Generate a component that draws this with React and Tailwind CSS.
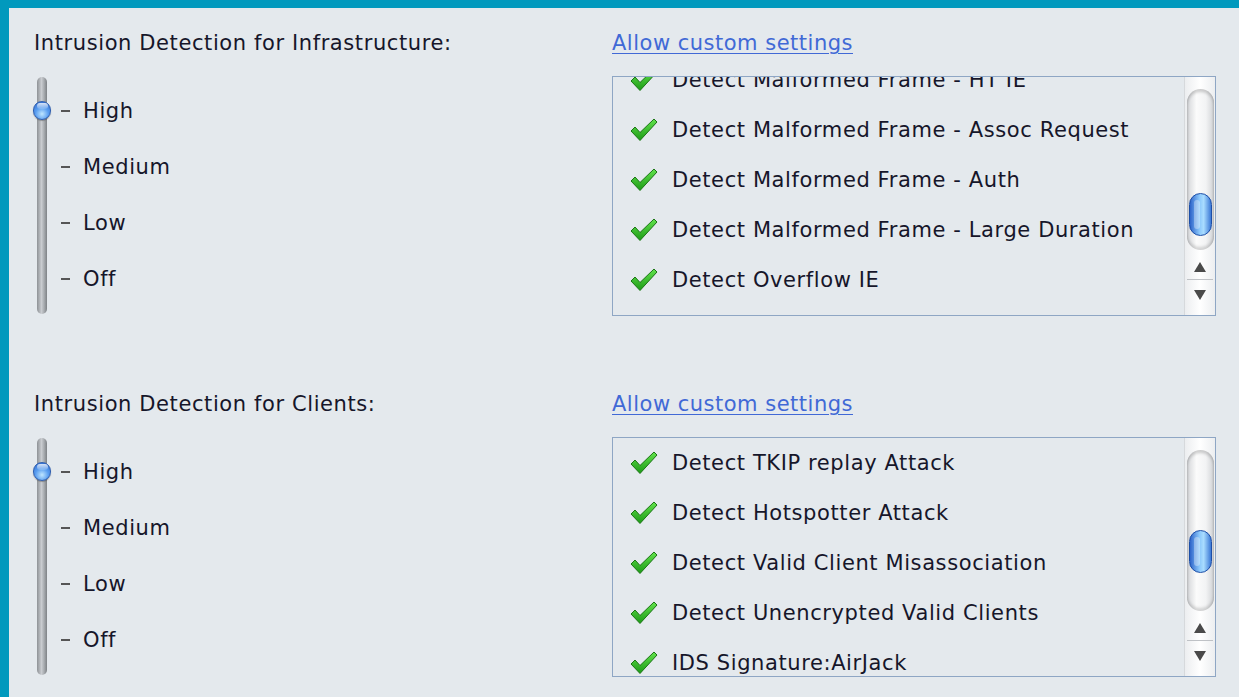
import React from "react";

const font = { fontFamily: '"DejaVu Sans", Verdana, sans-serif' };
const txt = "text-[21px] leading-[24px] tracking-[0.6px] text-[#16162a]";

function Check() {
  return (
    <svg width="28" height="24" viewBox="0 0 28 24" className="shrink-0">
      <defs>
        <linearGradient id="chk" x1="0" y1="0" x2="0" y2="1">
          <stop offset="0" stopColor="#62e34c" />
          <stop offset="1" stopColor="#1c9a16" />
        </linearGradient>
      </defs>
      <path
        d="M1 13 L5 9 L10 14.5 L24 1 L27 4 L10 22.5 Z"
        fill="url(#chk)"
        stroke="#1a7514"
        strokeWidth="1"
        strokeLinejoin="round"
      />
    </svg>
  );
}

function Knob() {
  return (
    <div className="absolute left-[-4px] top-[24px] h-[19px] w-[18px] rounded-full border border-[#2f5fb0] bg-[radial-gradient(circle_at_50%_70%,#bfe6ff_0%,#5a9ef0_45%,#2a62c8_100%)] shadow-[0_1px_1px_rgba(0,0,0,0.3)]">
      <div className="mx-auto mt-[1px] h-[6px] w-[11px] rounded-full bg-[linear-gradient(#ffffffcc,#ffffff22)]" />
    </div>
  );
}

function Slider() {
  const levels = ["High", "Medium", "Low", "Off"];
  return (
    <div className="relative flex h-[237px]">
      <div className="relative h-[237px] w-[10px] rounded-full bg-[linear-gradient(90deg,#8e9296_0%,#c9ccd0_45%,#a9adb1_70%,#7e8286_100%)]">
        <Knob />
      </div>
      <div className="flex flex-col pt-[22px]">
        {levels.map((l) => (
          <div key={l} className="flex h-[56px] shrink-0 items-start">
            <div className="flex h-[24px] items-center">
              <span className="ml-[14px] h-[2px] w-[9px] bg-[#555]" />
              <span className={`ml-[13px] ${txt}`}>{l}</span>
            </div>
          </div>
        ))}
      </div>
    </div>
  );
}

function Scrollbar({ thumbTop }) {
  return (
    <div className="flex w-[31px] flex-col border-l border-[#d6d9dc] bg-[linear-gradient(90deg,#eceef0,#ffffff_50%,#eceef0)]">
      <div className="relative mx-auto mt-[12px] h-[161px] w-[27px] rounded-full bg-[linear-gradient(90deg,#d3d5d8,#fbfbfb_35%,#f2f3f4_70%,#d0d2d5)] shadow-[inset_0_3px_3px_rgba(0,0,0,0.18),inset_0_-3px_3px_rgba(0,0,0,0.15)]">
        <div
          className="absolute left-[2px] h-[43px] w-[23px] rounded-full border border-[#1d4fa8] bg-[linear-gradient(90deg,#2d63c9,#8cc8fb_45%,#a9dcff_65%,#3b78d6)]"
          style={{ top: thumbTop }}
        >
          <div className="ml-[4px] mt-[6px] h-[29px] w-[6px] rounded-full bg-[#ffffff55]" />
        </div>
      </div>
      <div className="flex h-[29px] items-center justify-center pt-[4px]">
        <svg width="12" height="10" viewBox="0 0 12 10">
          <path d="M6 0 L12 10 L0 10 Z" fill="#4a4a4a" />
        </svg>
      </div>
      <div className="mx-[2px] h-px bg-[#bfc2c6]" />
      <div className="flex h-[30px] items-center justify-center">
        <svg width="12" height="10" viewBox="0 0 12 10">
          <path d="M0 0 L12 0 L6 10 Z" fill="#4a4a4a" />
        </svg>
      </div>
    </div>
  );
}

function ListBox({ items, offset, thumbTop }) {
  return (
    <div className="flex h-[240px] w-[604px] border border-[#8ea6c4]">
      <div className="flex-1 overflow-hidden">
        <div style={{ marginTop: offset }}>
          {items.map((t) => (
            <div key={t} className="flex h-[50px] items-center">
              <div className="ml-[17px]">
                <Check />
              </div>
              <span className={`ml-[14px] whitespace-nowrap ${txt}`}>{t}</span>
            </div>
          ))}
        </div>
      </div>
      <Scrollbar thumbTop={thumbTop} />
    </div>
  );
}

function Section({ title, items, offset, thumbTop }) {
  return (
    <div className="flex">
      <div className="w-[603px] shrink-0 pl-[25px]">
        <div className={`h-[46px] ${txt}`}>{title}</div>
        <div className="pl-[3px]">
          <Slider />
        </div>
      </div>
      <div>
        <a href="#" className="block h-[45px] text-[21px] leading-[24px] tracking-[0.5px] text-[#4169d6] underline decoration-1 underline-offset-[3px]">
          Allow custom settings
        </a>
        <ListBox items={items} offset={offset} thumbTop={thumbTop} />
      </div>
    </div>
  );
}

export default function App() {
  return (
    <div style={font} className="h-[697px] w-[1239px] overflow-hidden border-l-[9px] border-t-[8px] border-[#0199bd] bg-[#e4e9ed]">
      <div className="pt-[23px]">
        <Section
          title="Intrusion Detection for Infrastructure:"
          offset={-22}
          thumbTop={104}
          items={[
            "Detect Malformed Frame - HT IE",
            "Detect Malformed Frame - Assoc Request",
            "Detect Malformed Frame - Auth",
            "Detect Malformed Frame - Large Duration",
            "Detect Overflow IE",
          ]}
        />
        <div className="h-[76px]" />
        <Section
          title="Intrusion Detection for Clients:"
          offset={0}
          thumbTop={80}
          items={[
            "Detect TKIP replay Attack",
            "Detect Hotspotter Attack",
            "Detect Valid Client Misassociation",
            "Detect Unencrypted Valid Clients",
            "IDS Signature:AirJack",
          ]}
        />
      </div>
    </div>
  );
}
